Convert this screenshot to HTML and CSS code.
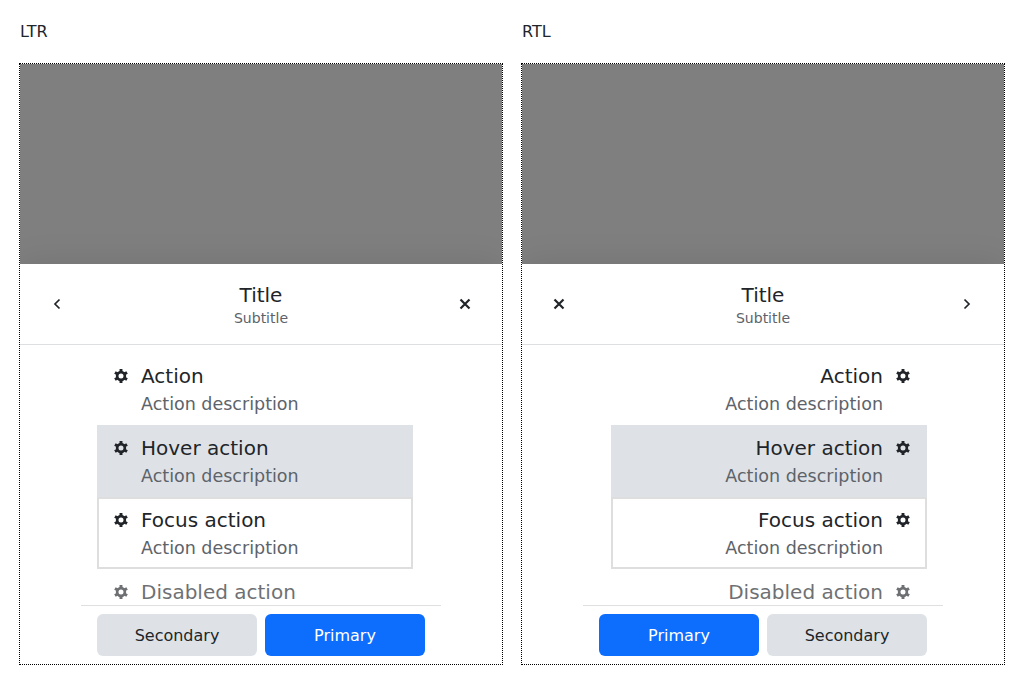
FILE: index.html
```html
<!DOCTYPE html>
<html lang="en">
<head>
<meta charset="utf-8">
<title>Bottom sheet</title>
<link rel="stylesheet" href="styles.css">
</head>
<body>
<svg class="sprite" aria-hidden="true">
  <symbol id="gear" viewBox="0 0 24 24">
    <g fill="none" stroke="currentColor">
      <circle cx="12" cy="12" r="6.600" stroke-width="4.600"/>
      <path d="M12 0v5.500M12 18.500V24M1.600 6l4.800 2.750M17.600 15.250 22.400 18M1.600 18l4.800-2.750M17.600 8.750 22.400 6" stroke-width="5"/>
    </g>
  </symbol>
  <symbol id="chevron" viewBox="0 0 24 24">
    <path d="M14.500 7.500 10 12l4.500 4.500" fill="none" stroke="currentColor" stroke-width="1.700"/>
  </symbol>
  <symbol id="cross" viewBox="0 0 24 24">
    <path d="m7.500 7.500 9 9m0-9-9 9" fill="none" stroke="currentColor" stroke-width="2.200"/>
  </symbol>
</svg>
<main class="demo">
  <section class="column">
    <p class="label">LTR</p>
    <div class="frame" dir="ltr">
      <div class="backdrop"></div>
      <div class="sheet">
        <header class="header">
          <button class="icon-button" aria-label="Back"><svg class="icon icon-back"><use href="#chevron"/></svg></button>
          <div class="heading">
            <div class="title">Title</div>
            <div class="subtitle">Subtitle</div>
          </div>
          <button class="icon-button" aria-label="Close"><svg class="icon"><use href="#cross"/></svg></button>
        </header>
        <div class="actions">
          <button class="action"><svg class="icon gear"><use href="#gear"/></svg><span class="text"><span class="name">Action</span><span class="description">Action description</span></span></button>
          <button class="action is-hover"><svg class="icon gear"><use href="#gear"/></svg><span class="text"><span class="name">Hover action</span><span class="description">Action description</span></span></button>
          <button class="action is-focus"><svg class="icon gear"><use href="#gear"/></svg><span class="text"><span class="name">Focus action</span><span class="description">Action description</span></span></button>
          <button class="action" disabled><svg class="icon gear"><use href="#gear"/></svg><span class="text"><span class="name">Disabled action</span><span class="description">Action description</span></span></button>
        </div>
        <footer class="footer">
          <button class="button">Secondary</button>
          <button class="button primary">Primary</button>
        </footer>
      </div>
    </div>
  </section>
  <section class="column">
    <p class="label">RTL</p>
    <div class="frame" dir="rtl">
      <div class="backdrop"></div>
      <div class="sheet">
        <header class="header">
          <button class="icon-button" aria-label="Back"><svg class="icon icon-back"><use href="#chevron"/></svg></button>
          <div class="heading">
            <div class="title">Title</div>
            <div class="subtitle">Subtitle</div>
          </div>
          <button class="icon-button" aria-label="Close"><svg class="icon"><use href="#cross"/></svg></button>
        </header>
        <div class="actions">
          <button class="action"><svg class="icon gear"><use href="#gear"/></svg><span class="text"><span class="name">Action</span><span class="description">Action description</span></span></button>
          <button class="action is-hover"><svg class="icon gear"><use href="#gear"/></svg><span class="text"><span class="name">Hover action</span><span class="description">Action description</span></span></button>
          <button class="action is-focus"><svg class="icon gear"><use href="#gear"/></svg><span class="text"><span class="name">Focus action</span><span class="description">Action description</span></span></button>
          <button class="action" disabled><svg class="icon gear"><use href="#gear"/></svg><span class="text"><span class="name">Disabled action</span><span class="description">Action description</span></span></button>
        </div>
        <footer class="footer">
          <button class="button">Secondary</button>
          <button class="button primary">Primary</button>
        </footer>
      </div>
    </div>
  </section>
</main>
</body>
</html>
```
FILE: styles.css
```css
* {
  box-sizing: border-box;
}

body {
  margin: 0;
  color: #212529;
  background: #fff;
  font: 16px/24px "DejaVu Sans", sans-serif;
}

button {
  margin: 0;
  padding: 0;
  border: 0;
  background: none;
  color: inherit;
  font: inherit;
  cursor: pointer;
}

.sprite {
  display: none;
}

.demo {
  display: grid;
  grid-template-columns: 1fr 1fr;
  gap: 20px;
  height: 100vh;
  padding: 20px;
}

.column {
  display: flex;
  flex-direction: column;
  gap: 20px;
  min-height: 0;
}

.label {
  margin: 0;
}

.frame {
  display: flex;
  flex: 1;
  flex-direction: column;
  min-height: 0;
  overflow: hidden;
  outline: 1px dotted #000;
}

.backdrop {
  flex: 1;
  background: #7f7f7f;
}

.sheet {
  display: flex;
  flex-direction: column;
  height: 400px;
  background: #fff;
  box-shadow: 0 0 32px rgba(0, 0, 0, 0.1);
}

.header {
  display: flex;
  align-items: center;
  padding: 17px 16px;
  border-bottom: 1px solid #dedfe0;
}

.heading {
  flex: 1;
  text-align: center;
}

.title {
  font-size: 20px;
  line-height: 28px;
}

.subtitle {
  color: #5c636a;
  font-size: 14px;
  line-height: 18px;
}

.icon-button {
  display: grid;
  place-items: center;
  width: 42px;
  height: 42px;
}

.icon {
  flex: none;
  width: 24px;
  height: 24px;
}

[dir="rtl"] .icon-back {
  transform: scaleX(-1);
}

.actions {
  flex: 1;
  width: 100%;
  max-width: 360px;
  min-height: 0;
  margin: 0 auto;
  padding: 8px 16px;
  padding-inline-end: 28px;
  overflow-y: auto;
  scrollbar-width: none;
}

.action {
  display: flex;
  gap: 8px;
  width: 100%;
  padding: 8px 12px;
  text-align: start;
}

.is-hover {
  background: #dee2e6;
}

.is-focus {
  outline: 2px solid #dedede;
  outline-offset: -2px;
}

.action:disabled {
  opacity: 0.65;
  cursor: default;
}

.gear {
  height: 30px;
  padding: 0 5px;
}

.name,
.description {
  display: block;
}

.name {
  line-height: 30px;
}

.description {
  color: #5c636a;
  font-size: 0.875em;
  line-height: 26px;
}

.text {
  font-size: 20px;
}

.footer {
  display: flex;
  gap: 8px;
  width: 100%;
  max-width: 360px;
  margin: 0 auto;
  padding: 8px 16px;
  border-top: 1px solid #dedfe0;
}

.button {
  flex: 1;
  padding: 10px 12px 8px;
  border-radius: 6px;
  background: #dee2e6;
}

.primary {
  background: #0d6efd;
  color: #fff;
}
```
